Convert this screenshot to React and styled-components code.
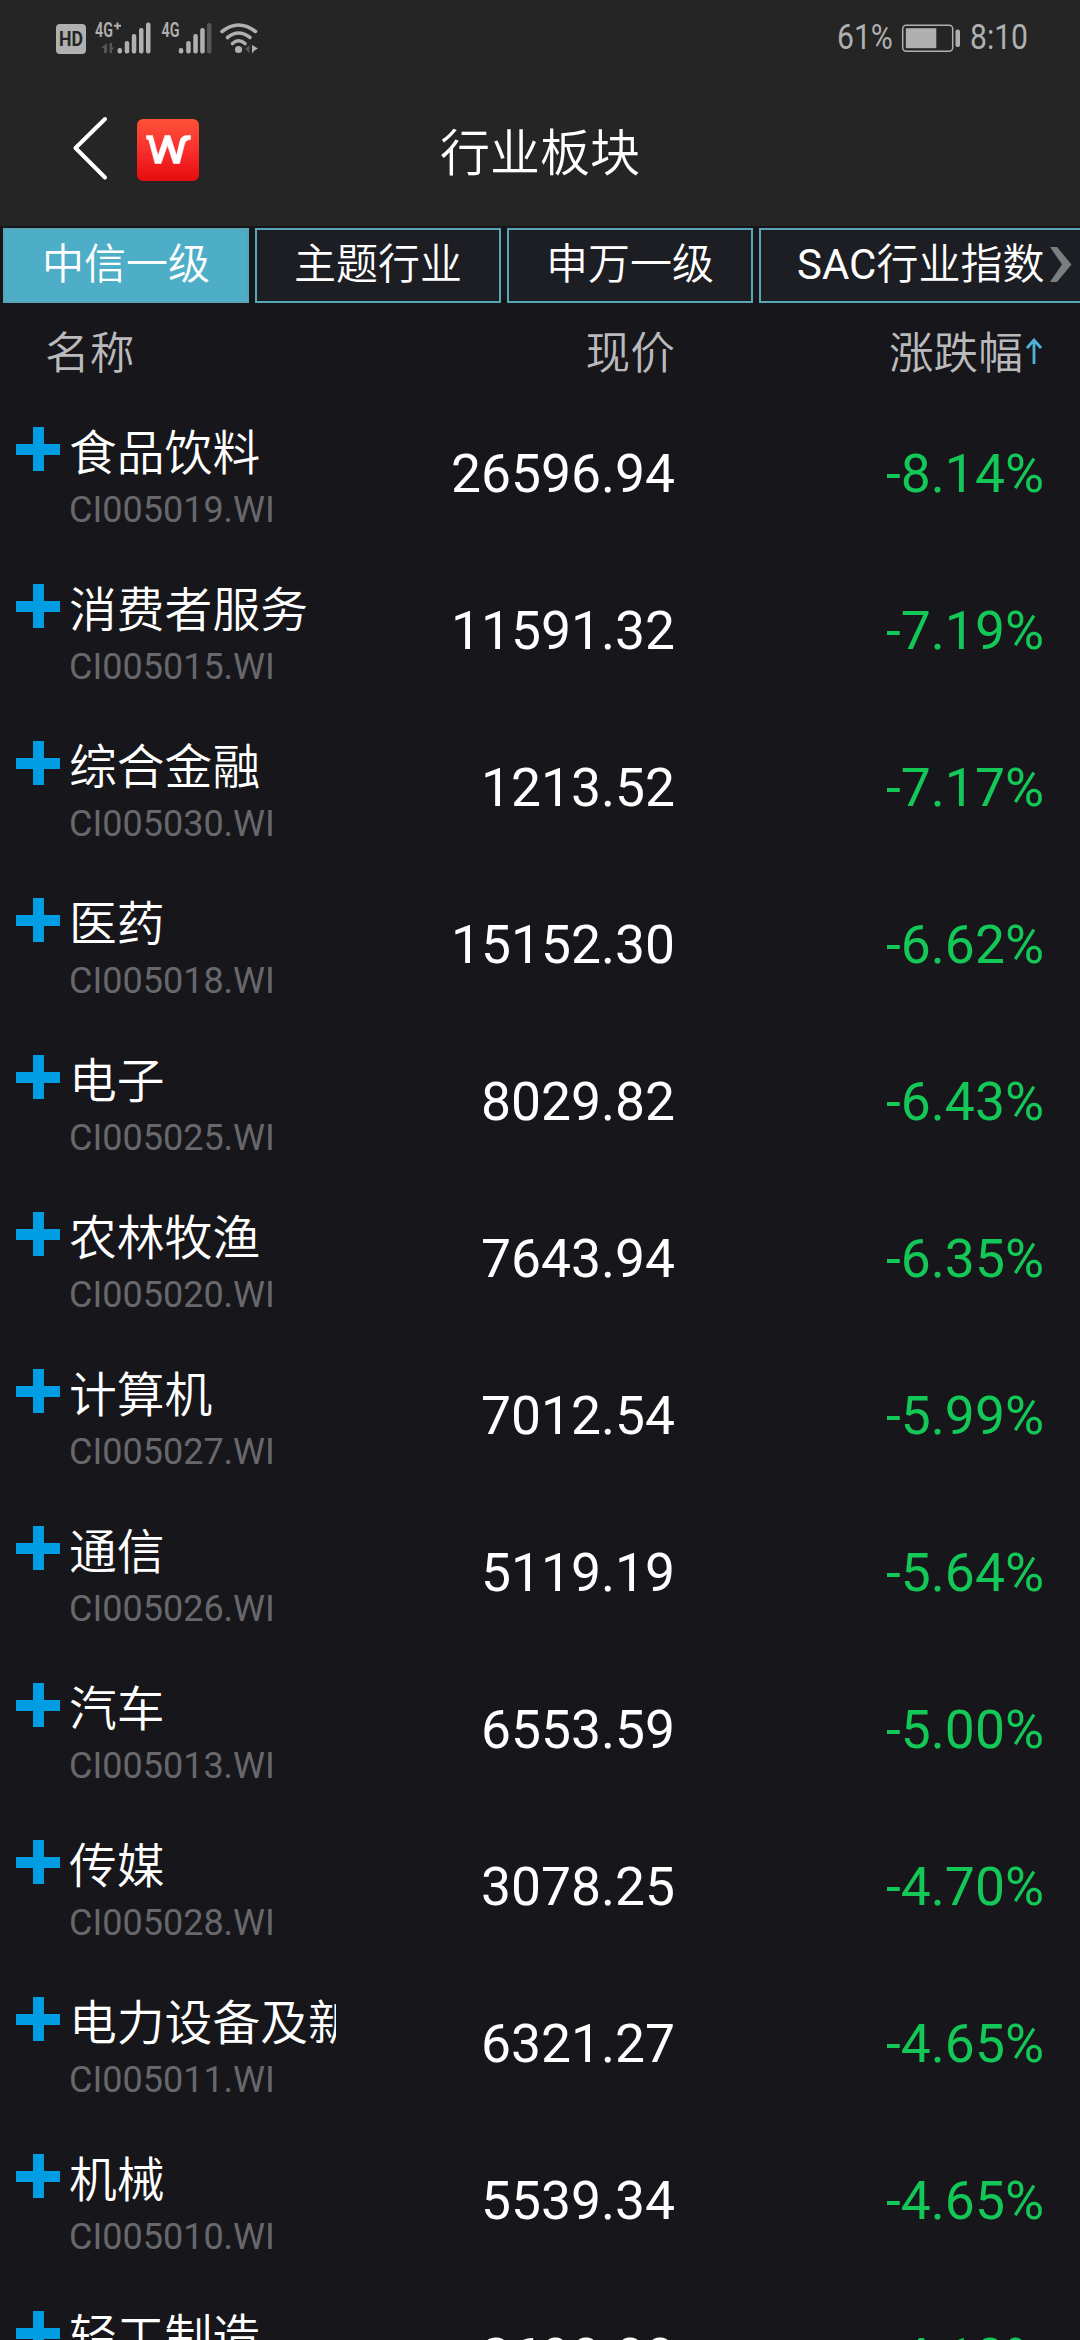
import React from "react";
import styled, { createGlobalStyle } from "styled-components";

const GlobalStyle = createGlobalStyle`
  *, *::before, *::after { box-sizing: border-box; }
  html, body { margin: 0; padding: 0; background: #17171b; }
  body { overflow: hidden; }
`;

const Screen = styled.div`
  width: 1080px;
  height: 2340px;
  display: flex;
  flex-direction: column;
  overflow: hidden;
  background: #17171b;
  color: #fff;
  font-family: Roboto, "Noto Sans CJK SC", sans-serif;
  font-weight: 400;
`;

const StatusBar = styled.div`
  height: 75px;
  flex: none;
  display: flex;
  justify-content: space-between;
  align-items: center;
  padding: 0 52px 0 56px;
  background: #252525;
  color: #b0b0b0;
`;

const StatusGroup = styled.div`
  display: flex;
  align-items: center;
  height: 75px;
`;

const StatusText = styled.span`
  width: ${(p) => p.$width}px;
  margin-top: 1px;
  font-size: 35px;
  line-height: 40px;
  white-space: nowrap;
  transform: scaleX(0.86);
  transform-origin: left center;
`;

const BatteryIcon = styled.svg`
  margin-right: 9px;
`;

const TitleBar = styled.header`
  height: 151px;
  flex: none;
  display: grid;
  grid-template-columns: 1fr auto 1fr;
  align-items: center;
  background: #252525;
`;

const NavGroup = styled.div`
  display: flex;
  align-items: center;
  gap: 28px;
  padding: 0 0 2px 72px;
`;

const BackArrow = styled.svg`
  margin-bottom: 4px;
`;

const Title = styled.h1`
  margin: 6px 0 0;
  font-size: 50px;
  line-height: 60px;
  font-weight: 350;
`;

const Tabs = styled.nav`
  position: relative;
  height: 79px;
  flex: none;
  display: flex;
  gap: 6px;
  padding: 2px 0 2px 3px;
  overflow: hidden;
`;

const Tab = styled.button`
  flex: none;
  height: 75px;
  margin: 0;
  padding: 0 ${(p) => (p.$wide ? 36 : 0)}px 2px;
  width: ${(p) => (p.$wide ? "auto" : "246px")};
  border: 2px solid #58a5b5;
  background: ${(p) => (p.$active ? "#4eaec8" : "#1d1e24")};
  color: #fff;
  font: inherit;
  font-weight: 350;
  font-size: 42px;
  line-height: 60px;
  white-space: nowrap;
`;

const Latin = styled.span`
  font-weight: 400;
`;

const MoreTabs = styled.svg`
  position: absolute;
  right: 8px;
  top: 21px;
`;

const columns = `
  display: grid;
  grid-template-columns: 336px 339px 369px;
  align-items: center;
`;

const ColumnHeads = styled.div`
  ${columns}
  height: 90px;
  flex: none;
  color: #bababd;
  font-size: 44.7px;
  font-weight: 350;
  line-height: 60px;
  padding-top: 7px;
`;

const Head = styled.div`
  display: flex;
  align-items: center;
  justify-content: ${(p) => (p.$first ? "flex-start" : "flex-end")};
  padding-left: ${(p) => (p.$first ? 45 : 0)}px;
`;

const SortArrow = styled.svg`
  margin: -4px 2px 0 3px;
`;

const List = styled.main`
  flex: 1;
  min-height: 0;
  overflow: hidden;
`;

const Row = styled.div`
  ${columns}
  height: 157px;
`;

const Instrument = styled.div`
  display: flex;
  align-items: flex-start;
  gap: 9px;
  height: 157px;
  padding: 22px 0 0 16px;
`;

const PlusIcon = styled.svg`
  flex: none;
  margin-top: 10px;
`;

const Labels = styled.div`
  min-width: 0;
  flex: 1;
`;

const Name = styled.div`
  height: 72px;
  font-size: 47.8px;
  font-weight: 350;
  line-height: 74px;
  white-space: nowrap;
  overflow: hidden;
`;

const Code = styled.div`
  font-size: 36px;
  line-height: 44px;
  margin-top: -1px;
  color: #68686c;
  white-space: nowrap;
`;

const Figure = styled.div`
  padding-top: 1px;
  text-align: right;
  font-size: 53.4px;
  line-height: 64px;
  color: ${(p) => (p.$down ? "#13c857" : "#fff")};
`;

const rows = [
  ["食品饮料", "CI005019.WI", "26596.94", "-8.14%"],
  ["消费者服务", "CI005015.WI", "11591.32", "-7.19%"],
  ["综合金融", "CI005030.WI", "1213.52", "-7.17%"],
  ["医药", "CI005018.WI", "15152.30", "-6.62%"],
  ["电子", "CI005025.WI", "8029.82", "-6.43%"],
  ["农林牧渔", "CI005020.WI", "7643.94", "-6.35%"],
  ["计算机", "CI005027.WI", "7012.54", "-5.99%"],
  ["通信", "CI005026.WI", "5119.19", "-5.64%"],
  ["汽车", "CI005013.WI", "6553.59", "-5.00%"],
  ["传媒", "CI005028.WI", "3078.25", "-4.70%"],
  ["电力设备及新能源", "CI005011.WI", "6321.27", "-4.65%"],
  ["机械", "CI005010.WI", "5539.34", "-4.65%"],
  ["轻工制造", "CI005024.WI", "2698.88", "-4.18%"],
];

const tabs = [
  { label: "中信一级", active: true },
  { label: "主题行业" },
  { label: "申万一级" },
  { latin: "SAC", label: "行业指数", wide: true },
];

function SignalIcons() {
  return (
    <svg width="204" height="38" viewBox="56 18 204 38" fill="#b0b0b0" overflow="visible">
      <rect x="56" y="23" width="30" height="30" rx="4" />
      <text x="71" y="45.3" fontSize="20" fontWeight="700" fill="#252525" textAnchor="middle" textLength="24" lengthAdjust="spacingAndGlyphs">HD</text>
      <text x="95" y="36" fontSize="19.5" fontWeight="600" textLength="18" lengthAdjust="spacingAndGlyphs">4G</text>
      <path d="M114 24.8h7M117.5 21.5v7" stroke="#b0b0b0" strokeWidth="2" />
      <g fill="#555">
        <path d="M107 42v10h-3v-5h-3zM109.500 42v10h2.500v-3l2.500-2.500h-2.500v-4.500z" />
        <rect x="207" y="22" width="4.5" height="30.5" rx="2" />
      </g>
      <rect x="117.5" y="47" width="4.5" height="5.5" rx="2" />
      <rect x="124.7" y="40" width="4.5" height="12.5" rx="2" />
      <rect x="131.8" y="33" width="4.5" height="19.5" rx="2" />
      <rect x="139" y="27" width="4.5" height="25.5" rx="2" />
      <rect x="146" y="21.5" width="4.5" height="31" rx="2" />
      <text x="161.5" y="36" fontSize="19.5" fontWeight="600" textLength="18" lengthAdjust="spacingAndGlyphs">4G</text>
      <rect x="178.8" y="47" width="4.5" height="5.5" rx="2" />
      <rect x="186.2" y="40" width="4.5" height="12.5" rx="2" />
      <rect x="193.3" y="33" width="4.5" height="19.5" rx="2" />
      <rect x="200.2" y="27" width="4.5" height="25.5" rx="2" />
      <g fill="none" stroke="#b0b0b0" strokeWidth="3.6" strokeLinecap="round">
        <path d="M222 30.5Q238.5 17.500 255.5 30.5" />
        <path d="M227.5 36.5Q238.5 27.5 250 36.5" />
        <path d="M232.5 42.5Q238.5 37 245 42.5" />
      </g>
      <circle cx="238.5" cy="48.5" r="3.6" />
      <path d="M249.5 44v8l-4.500-4z" fill="#555" />
      <path d="M252 44l6 3.500-3.500 2-2.500 3z" />
    </svg>
  );
}

function Battery() {
  return (
    <BatteryIcon width="60" height="28" viewBox="901 23.5 60 28" fill="#b0b0b0">
      <rect x="902.7" y="24.7" width="50" height="26" rx="3.5" fill="none" stroke="#b0b0b0" strokeWidth="1.5" />
      <rect x="905.8" y="27.7" width="30.5" height="20" />
      <rect x="955.5" y="29" width="4.5" height="17.5" rx="2" />
    </BatteryIcon>
  );
}

function BackIcon() {
  return (
    <BackArrow width="37" height="66" viewBox="0 0 37 66" fill="none" stroke="#fff" strokeWidth="4" strokeLinecap="round" strokeLinejoin="round">
      <path d="M33 4L3.5 33L33 62.5" />
    </BackArrow>
  );
}

function BrandLogo() {
  return (
    <svg width="62" height="62" viewBox="0 0 62 62">
      <defs>
        <linearGradient id="brand" x1="0" y1="0" x2="0" y2="1">
          <stop offset="0" stopColor="#ff5138" />
          <stop offset="0.5" stopColor="#f92f2f" />
          <stop offset="1" stopColor="#e50c0c" />
        </linearGradient>
      </defs>
      <rect width="62" height="62" rx="6" fill="url(#brand)" />
      <path d="M9.500 16.500H15.500L21 36.500L28 16.500H33L39.500 36.500L43 22Q44.500 16.500 50 16.500H53.500V20.500Q48.500 20.500 47.500 25L42.500 44.500H36.500L30.500 26L24 44.500H18L12 21.500Q11.500 20 9.500 20Z" fill="#fff" stroke="#fff" strokeWidth="0.600" strokeLinejoin="round" />
    </svg>
  );
}

export default function App() {
  return (
    <Screen lang="zh-CN">
      <GlobalStyle />
      <StatusBar>
        <StatusGroup><SignalIcons /></StatusGroup>
        <StatusGroup>
          <StatusText $width={64}>61%</StatusText>
          <Battery />
          <StatusText $width={58}>8:10</StatusText>
        </StatusGroup>
      </StatusBar>
      <TitleBar>
        <NavGroup>
          <BackIcon />
          <BrandLogo />
        </NavGroup>
        <Title>行业板块</Title>
      </TitleBar>
      <Tabs>
        {tabs.map(({ label, latin, active, wide }) => (
          <Tab key={label} $active={active} $wide={wide}>
            {latin && <Latin>{latin}</Latin>}
            {label}
          </Tab>
        ))}
        <MoreTabs width="22" height="35" viewBox="0 0 22 35" fill="#7c7d80">
          <path d="M0 0H7L21.5 17.5L7 35H0L12 17.5Z" />
        </MoreTabs>
      </Tabs>
      <ColumnHeads>
        <Head $first>名称</Head>
        <Head>现价</Head>
        <Head>
          涨跌幅
          <SortArrow width="16" height="27" viewBox="0 0 16 27" fill="none" stroke="#4fb3d9" strokeWidth="2.8">
            <path d="M8 26V2M1 10L8 2L15 10" />
          </SortArrow>
        </Head>
      </ColumnHeads>
      <List>
        {rows.map(([name, code, price, change]) => (
          <Row key={code}>
            <Instrument>
              <PlusIcon width="44" height="44" viewBox="0 0 44 44" fill="#009de3">
                <path d="M17 0H28V17H44V28H28V44H17V28H0V17H17Z" />
              </PlusIcon>
              <Labels>
                <Name>{name}</Name>
                <Code>{code}</Code>
              </Labels>
            </Instrument>
            <Figure>{price}</Figure>
            <Figure $down>{change}</Figure>
          </Row>
        ))}
      </List>
    </Screen>
  );
}
